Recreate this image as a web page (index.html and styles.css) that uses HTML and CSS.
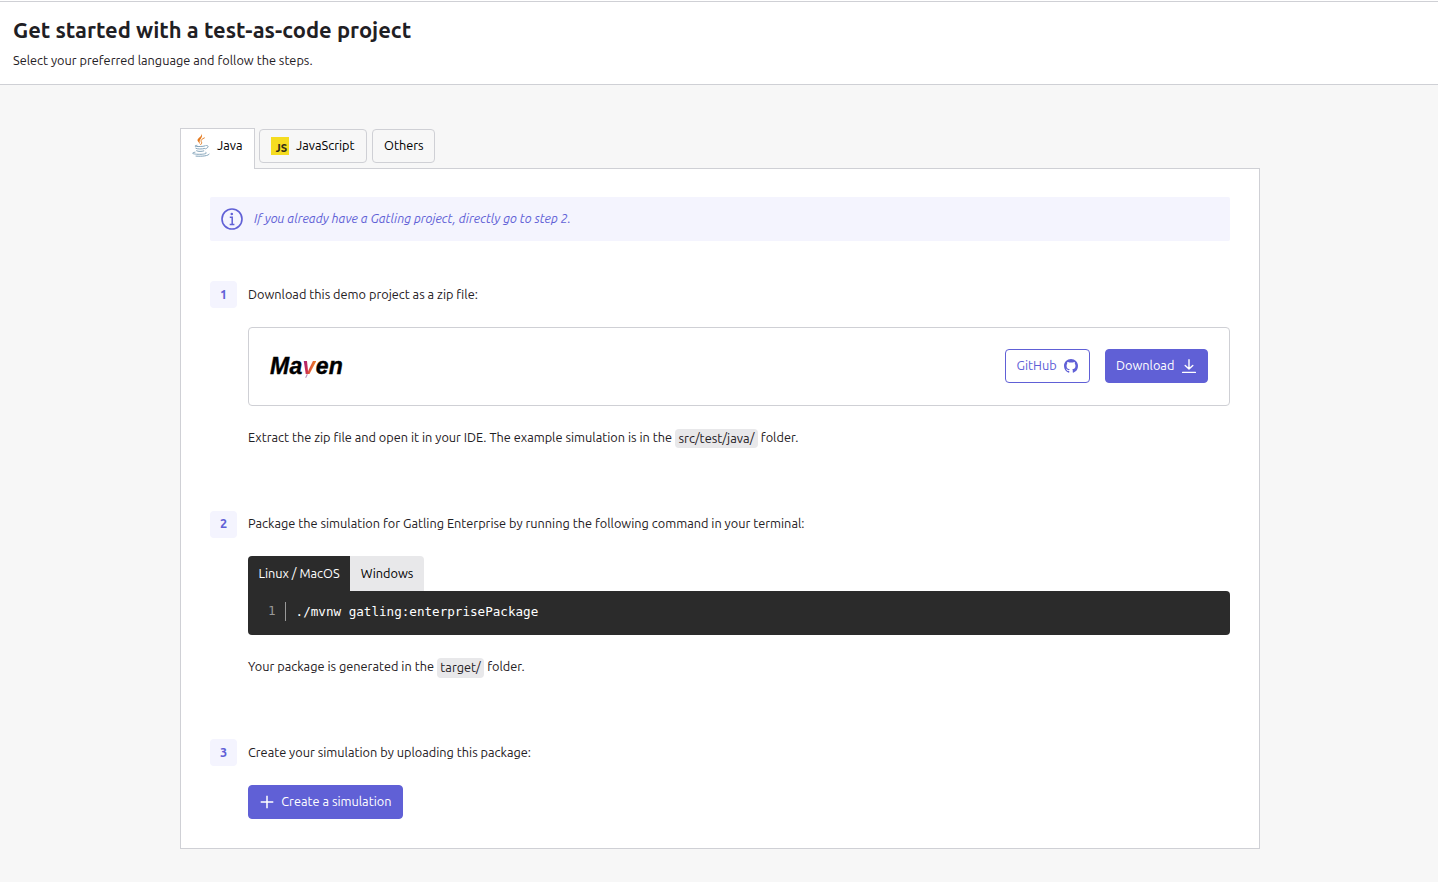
FILE: index.html
```html
<!DOCTYPE html>
<html lang="en">
<head>
<meta charset="utf-8">
<title>Get started with a test-as-code project</title>
<link rel="stylesheet" href="styles.css">
</head>
<body>
<header class="page-header">
  <h1 class="title">Get started with a test-as-code project</h1>
  <p class="subtitle">Select your preferred language and follow the steps.</p>
</header>
<main class="content">
  <nav class="tabs">
    <button class="tab tab-active">
      <svg class="java-icon" width="20" height="24" viewBox="0 0 20 24" fill="none" stroke-linecap="round">
        <path d="M10.400 .4c1.200 3-4.500 4.600-3.900 7.200.4 1.600 2.200 2.600 2.900 4.200-.2-1.700-1.200-2.700-.7-4.100C9.400 5.700 12.300 3.600 10.400.4z" fill="#e57a1f"/>
        <path d="M13.400 4.900c-2.400 1-3.800 2.200-3.200 3.600.6 1 .9 1.800-.5 3.100" stroke="#e5832d" stroke-width="1"/>
        <path d="M6 12.300c-4 .8-2 1.400 3.200 1.200 2 0 3.600-.2 4.800-.6M15 12.500c3.200-.4 2.700 2.400-.4 3.300M4.800 15.300c1.200 1 6.400.9 8.700.2M5.600 17.800c1.600.9 5.200.8 7.200.1M4 19.200c-4.600.8-2.500 2.100 4.700 2.100 5 0 8.200-1 6.200-1.900M5 23.100c6.500.5 12.700-.3 13.200-2" stroke="#7d9fb6" stroke-width=".95"/>
      </svg>
      <span class="label">Java</span>
    </button>
    <button class="tab tab-js">
      <span class="js-icon">JS</span>
      <span class="label">JavaScript</span>
    </button>
    <button class="tab tab-others"><span class="label">Others</span></button>
  </nav>
  <section class="panel">
    <div class="info">
      <svg width="22" height="22" viewBox="0 0 22 22" fill="none" stroke="#6060d6">
        <circle cx="11" cy="11" r="10" stroke-width="1.600"/>
        <circle cx="10.800" cy="6" r="1.300" fill="#6060d6" stroke="none"/>
        <path d="M8.800 9.200h2.400v7M8.700 16.400h4.700" stroke-width="1.500"/>
      </svg>
      <em class="label info-text">If you already have a Gatling project, directly go to step 2.</em>
    </div>
    <div class="step step-one">
      <span class="number">1</span>
      <div class="body">
        <p class="lead">Download this demo project as a zip file:</p>
        <div class="card">
          <span class="maven">Ma<span class="feather">v</span>en</span>
          <div class="actions">
            <button class="button outline"><span class="label">GitHub</span>
              <svg width="14" height="14" viewBox="0 0 16 16" fill="#6060d6"><path d="M8 0C3.580 0 0 3.580 0 8c0 3.540 2.290 6.530 5.470 7.590.4.070.55-.17.55-.38 0-.19-.01-.82-.01-1.490-2.010.37-2.530-.49-2.690-.94-.09-.23-.48-.94-.82-1.130-.28-.15-.68-.52-.01-.53.63-.01 1.080.58 1.230.82.72 1.210 1.870.87 2.330.66.07-.52.28-.87.51-1.070-1.780-.2-3.640-.89-3.640-3.950 0-.87.31-1.590.82-2.150-.08-.2-.36-1.020.08-2.120 0 0 .67-.21 2.200.82.64-.18 1.320-.27 2-.27s1.360.09 2 .27c1.530-1.040 2.200-.82 2.200-.82.44 1.100.16 1.920.08 2.120.51.56.82 1.270.82 2.150 0 3.070-1.870 3.750-3.650 3.950.29.25.54.73.54 1.480 0 1.070-.01 1.930-.01 2.200 0 .21.15.46.55.38A8.010 8.010 0 0 0 16 8c0-4.420-3.580-8-8-8z"/></svg>
            </button>
            <button class="button solid"><span class="label">Download</span>
              <svg width="14" height="14" viewBox="0 0 14 14" fill="none" stroke="#fff" stroke-width="1.400" stroke-linecap="round" stroke-linejoin="round"><path d="M7 .8v9M3.200 6.400 7 10.100l3.800-3.700M.6 13.400h12.800"/></svg>
            </button>
          </div>
        </div>
        <p class="note note-source">Extract the zip file and open it in your IDE. The example simulation is in the <code class="path">src/test/java/</code> folder.</p>
      </div>
    </div>
    <div class="step step-two">
      <span class="number">2</span>
      <div class="body">
        <p class="lead lead-two">Package the simulation for Gatling Enterprise by running the following command in your terminal:</p>
        <div class="code-tabs">
          <button class="code-tab dark"><span class="label">Linux / MacOS</span></button>
          <button class="code-tab light"><span class="label">Windows</span></button>
        </div>
        <div class="code"><span class="line-number">1</span><span class="command">./mvnw gatling:enterprisePackage</span></div>
        <p class="note note-target">Your package is generated in the <code class="path">target/</code> folder.</p>
      </div>
    </div>
    <div class="step step-three">
      <span class="number">3</span>
      <div class="body">
        <p class="lead">Create your simulation by uploading this package:</p>
        <button class="button solid create">
          <svg width="14" height="14" viewBox="0 0 14 14" fill="none" stroke="#fff" stroke-width="1.500"><path d="M7 .7v12.600M.7 7h12.600"/></svg>
          <span class="label">Create a simulation</span>
        </button>
      </div>
    </div>
  </section>
</main>
</body>
</html>
```
FILE: styles.css
```css
* { box-sizing: border-box; }
body { margin: 0; height: 882px; overflow: hidden; background: #f7f7f7; color: #1f2024; font: 12.740px/20px "Ubuntu", "Noto Sans", sans-serif; }
h1, p { margin: 0; white-space: nowrap; }
button { font: inherit; color: inherit; margin: 0; padding: 0; white-space: nowrap; }
svg { display: block; flex: none; }
.label { display: block; padding-bottom: 2px; }
.page-header { height: 85px; padding: 15px 13px 0; background: linear-gradient(#fff 1px, #cfd0d5 1px, #cfd0d5 2px, #fff 2px); border-bottom: 1px solid #cfd0d5; }
.title { font-size: 21.960px; line-height: 30px; font-weight: 700; }
.subtitle { margin-top: 5px; }
.content { width: 1080px; margin: 43px 0 0 180px; }
.tabs { display: flex; height: 41px; margin-bottom: -1px; position: relative; }
.tab { display: flex; align-items: center; height: 34px; margin-top: 1px; border: 1px solid #cfd0d5; border-radius: 4px; background: #f7f7f7; color: #000; }
.tab-active { width: 75px; height: 41px; margin: 0 4px 0 0; padding: 0 0 6px 10px; gap: 6px; border-bottom: 0; border-radius: 0; background: #fff; }
.java-icon { margin-top: -2px; }
.tab-js { width: 108px; margin-right: 5px; padding-left: 11px; gap: 7px; }
.tab-others { width: 63px; padding-left: 11px; }
.js-icon { width: 18px; height: 18px; padding: 4px 2px 0 0; background: #f5dc20; color: #333016; font: 900 11.500px/14px Lato, sans-serif; text-align: right; }
.panel { height: 681px; padding: 28px 29px; background: #fff; border: 1px solid #cfd0d5; }
.info { display: flex; align-items: center; gap: 11px; height: 44px; padding-left: 11px; background: #f4f4fe; color: #6060d6; border-radius: 2px; }
.info-text { font-size: 12.620px; }
.step { display: flex; gap: 11px; }
.step-one { height: 230px; margin-top: 40px; }
.step-two { height: 228px; }
.number { width: 27px; height: 27px; flex: none; border-radius: 4px; background: #f4f4fe; color: #6060d6; font-weight: 700; line-height: 27px; text-align: center; }
.step-two .number { line-height: 25px; }
.body { flex: 1; }
.lead { height: 27px; line-height: 26px; }
.lead-two { line-height: 24px; }
.card { display: flex; align-items: center; justify-content: space-between; height: 79px; margin-top: 19px; padding: 0 21px 2px; border: 1px solid #cfd0d5; border-radius: 4px; }
.maven { color: #000; font: italic 700 23px/24px "Liberation Sans", Arial, sans-serif; letter-spacing: 0.3px; -webkit-text-stroke: 0.4px currentColor; }
.feather { position: relative; -webkit-text-stroke: 0; background: linear-gradient(105deg, #a3297c 15%, #c92853 40%, #e66d2d 65%, #f69923); background-clip: text; -webkit-background-clip: text; color: transparent; }
.feather::after { content: ""; position: absolute; left: 3px; bottom: 1px; width: 1px; height: 4px; background: #b68bb8; transform: rotate(25deg); }
.actions { display: flex; gap: 15px; }
.button { display: flex; align-items: center; justify-content: space-between; height: 34px; padding: 0 11px; border: 1px solid #6060d6; border-radius: 4px; }
.outline { width: 85px; padding-left: 10.500px; background: #fff; color: #6060d6; }
.solid { width: 103px; padding-left: 10px; background: #6060d6; color: #fff; }
.note { height: 20px; margin-top: 21px; }
.path { display: inline-block; height: 20px; padding: 0 3.500px; border-radius: 4px; background: #e8e8ea; font: inherit; }
.note-source .path { height: 19px; line-height: 19px; position: relative; top: 1px; font-size: 12.850px; }
.note-target .path { position: relative; top: 1px; line-height: 18px; }
.code-tabs { display: flex; height: 35px; margin-top: 18px; }
.code-tab { border: 0; }
.dark { width: 102px; border-radius: 4px 0 0; background: #2b2b2b; color: #fff; }
.light { width: 74px; border-radius: 0 4px 0 0; background: #e8e8ea; color: #000; }
.code { display: flex; align-items: center; height: 44px; padding: 0 0 4px 20px; border-radius: 0 4px 4px; background: #2b2b2b; color: #fff; font: 12.600px/19px "DejaVu Sans Mono", monospace; }
.line-number { width: 18px; height: 19px; margin-right: 9.600px; border-right: 1px solid #999; color: #999; line-height: 17px; }
.create { width: 155px; margin-top: 19px; padding: 0 10.500px 0 11px; }
```
